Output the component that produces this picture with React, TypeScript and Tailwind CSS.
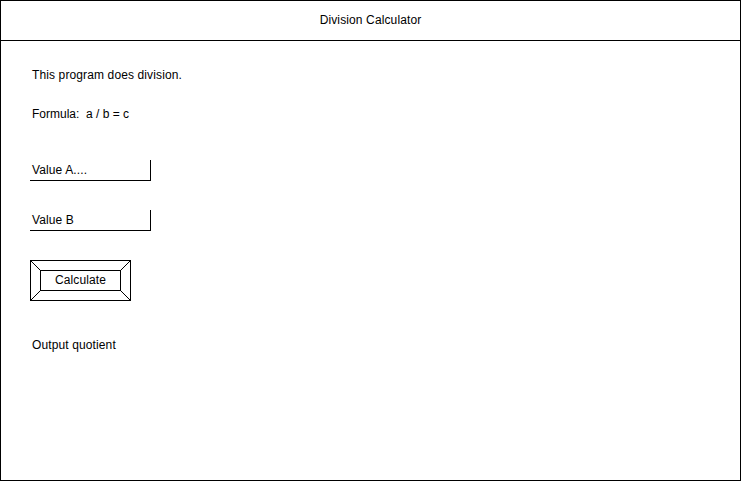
export default function App() {
  return (
    <div className="w-[741px] h-[481px] bg-white border border-black flex flex-col text-[12px] tracking-[0.12px] text-black font-['Liberation_Sans',Arial,sans-serif]">
      {/* title bar */}
      <div className="h-[40px] border-b border-black flex items-center justify-center pb-[2px]">
        Division Calculator
      </div>

      {/* body */}
      <div className="flex flex-col items-start pl-[29px] pt-[27px]">
        <p className="h-[14px] leading-[14px] pl-[2px]">This program does division.</p>
        <p className="h-[14px] leading-[14px] pl-[2px] mt-[25px] whitespace-pre tracking-normal">Formula:  a / b = c</p>

        <div className="mt-[39px] w-[121px] h-[21px] border-b border-r border-black flex items-center pl-[2px]">
          Value A....
        </div>
        <div className="mt-[29px] w-[121px] h-[21px] border-b border-r border-black flex items-center pl-[2px]">
          Value B
        </div>

        <div className="relative mt-[29px] w-[101px] h-[41px] border border-black p-[9px]">
          <svg className="absolute inset-0" width="99" height="39" viewBox="0 0 99 39">
            <path d="M0 0 L9 9 M99 0 L90 9 M0 39 L9 30 M99 39 L90 30" stroke="black" strokeWidth="1" fill="none" />
          </svg>
          <div className="relative w-[81px] h-[21px] border border-black flex items-center justify-center bg-white pb-[1px]">
            Calculate
          </div>
        </div>

        <p className="h-[14px] leading-[14px] pl-[2px] mt-[37px]">Output quotient</p>
      </div>
    </div>
  );
}
